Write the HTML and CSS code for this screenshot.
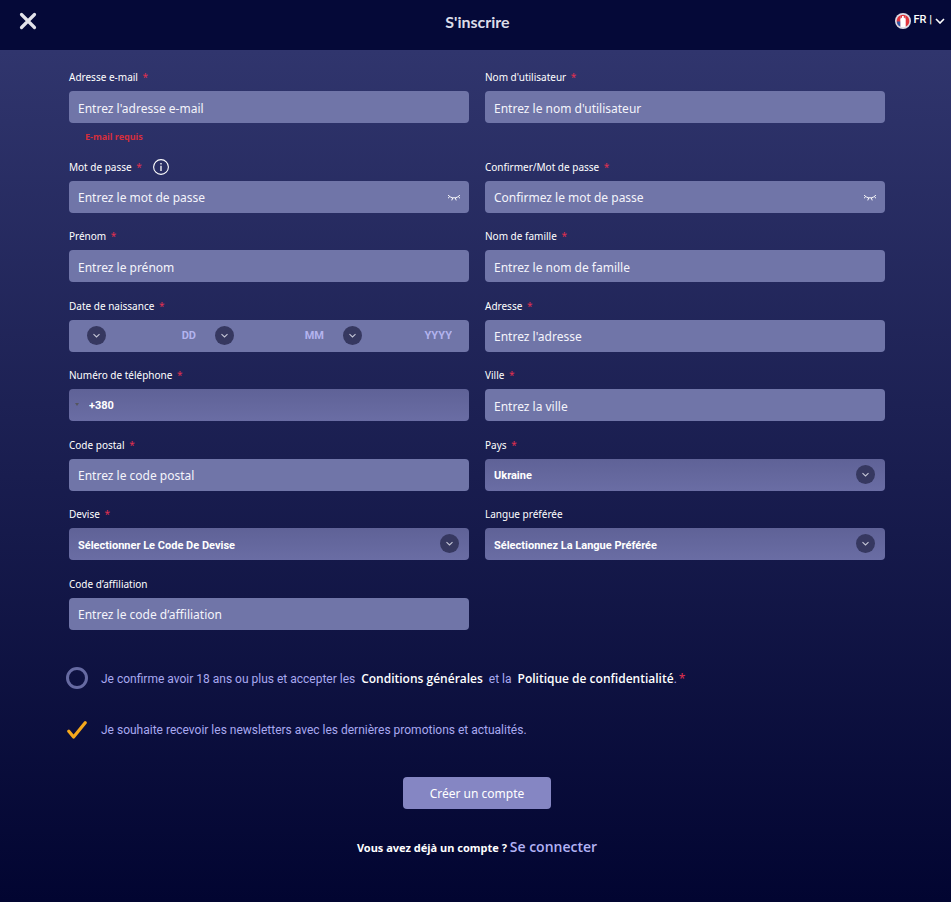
FILE: index.html
```html
<!DOCTYPE html>
<html lang="fr">
  <head>
    <meta charset="UTF-8" />
    <meta name="viewport" content="width=device-width, initial-scale=1.0" />
    <title>S'inscrire</title>
    <link rel="stylesheet" href="styles.css">
  </head>
  <body>
    <svg class="sprite" aria-hidden="true">
      <symbol id="chevron" viewBox="0 0 19 19">
        <circle cx="9.5" cy="9.5" r="9.5" fill="#363860" />
        <path d="M6.5 8.2l3 2.8 3-2.8" fill="none" stroke="#c5c6d6" stroke-width="1.1" />
      </symbol>
      <symbol id="eye" viewBox="0 0 14 8">
        <path d="M1.2 1C3.5 4.8 10.5 4.8 12.8 1M2.6 2.8L1 4.2M5.6 4L4.8 6.4M8.4 4l.8 2.4M11.4 2.8L13 4.2" fill="none" stroke="#fff" stroke-width="1" />
      </symbol>
    </svg>

    <header class="header">
      <button class="close" type="button" aria-label="Fermer">
        <svg width="18" height="18" viewBox="0 0 18 18">
          <path d="M2.5 2.5l13 13M15.5 2.5l-13 13" stroke="#e3e3ea" stroke-width="3.2" stroke-linecap="round" />
        </svg>
      </button>
      <h1>S'inscrire</h1>
      <button class="lang" type="button">
        <svg width="16" height="16" viewBox="0 0 16 16">
          <circle cx="8" cy="8" r="8" fill="#dcdce6" />
          <path d="M5.5 2.2v11.6A6.4 6.4 0 0 1 1.7 8a6.4 6.4 0 0 1 3.8-5.8z" fill="#e0343c" />
          <path d="M1.9 8.5h3.6v5.3a6.4 6.4 0 0 1-3.6-5.3z" fill="#2c5aa8" />
          <path d="M10.5 2.2v11.6A6.4 6.4 0 0 0 14.3 8a6.4 6.4 0 0 0-3.8-5.8z" fill="#e0343c" />
          <path d="M5.5 2.2a6.4 6.4 0 0 1 5 0v2.6h-5z" fill="#e0343c" />
          <path d="M5.5 6l1.5-1V3h1.8v2l1.7 1v8h-5z" fill="#fff" />
        </svg>
        <span>FR |</span>
        <svg width="10" height="6" viewBox="0 0 10 6">
          <path d="M1 1l4 4 4-4" fill="none" stroke="#fff" stroke-width="1.6" />
        </svg>
      </button>
    </header>

    <form class="form" id="form">
      <div class="fields">
        <div class="form-control">
          <label for="email">Adresse e-mail <b>*</b></label>
          <input type="text" id="email" placeholder="Entrez l'adresse e-mail" />
          <span class="error">E-mail requis</span>
        </div>
        <div class="form-control">
          <label for="username">Nom d'utilisateur <b>*</b></label>
          <input type="text" id="username" placeholder="Entrez le nom d'utilisateur" />
        </div>

        <div class="form-control">
          <div class="label-row">
            <label for="password">Mot de passe <b>*</b></label>
            <button class="info" type="button" aria-label="Information">
              <svg width="16" height="16" viewBox="0 0 16 16">
                <circle cx="8" cy="8" r="7.4" fill="none" stroke="#fff" stroke-width="1.1" />
                <path d="M8 4v1.5M8 6.8V12" stroke="#fff" stroke-width="1.3" />
              </svg>
            </button>
          </div>
          <div class="box">
            <input type="password" id="password" placeholder="Entrez le mot de passe" />
            <button class="eye" type="button" aria-label="Afficher"><svg width="14" height="8"><use href="#eye" /></svg></button>
          </div>
        </div>
        <div class="form-control">
          <label for="confirmpassword">Confirmer/Mot de passe <b>*</b></label>
          <div class="box">
            <input type="password" id="confirmpassword" placeholder="Confirmez le mot de passe" />
            <button class="eye" type="button" aria-label="Afficher"><svg width="14" height="8"><use href="#eye" /></svg></button>
          </div>
        </div>

        <div class="form-control">
          <label for="firstname">Prénom <b>*</b></label>
          <input type="text" id="firstname" placeholder="Entrez le prénom" />
        </div>
        <div class="form-control">
          <label for="lastname">Nom de famille <b>*</b></label>
          <input type="text" id="lastname" placeholder="Entrez le nom de famille" />
        </div>

        <div class="form-control">
          <label for="day">Date de naissance <b>*</b></label>
          <div class="date">
            <div class="box">
              <select id="day"><option>DD</option></select>
              <svg class="arrow"><use href="#chevron" /></svg>
            </div>
            <div class="box">
              <select id="month" aria-label="Mois"><option>MM</option></select>
              <svg class="arrow"><use href="#chevron" /></svg>
            </div>
            <div class="box">
              <select id="year" aria-label="Année"><option>YYYY</option></select>
              <svg class="arrow"><use href="#chevron" /></svg>
            </div>
          </div>
        </div>
        <div class="form-control">
          <label for="address">Adresse <b>*</b></label>
          <input type="text" id="address" placeholder="Entrez l'adresse" />
        </div>

        <div class="form-control">
          <label for="phone">Numéro de téléphone <b>*</b></label>
          <div class="box">
            <input class="phone" type="tel" id="phone" value="+380" />
            <span class="caret"></span>
          </div>
        </div>
        <div class="form-control">
          <label for="city">Ville <b>*</b></label>
          <input type="text" id="city" placeholder="Entrez la ville" />
        </div>

        <div class="form-control">
          <label for="zip">Code postal <b>*</b></label>
          <input type="text" id="zip" placeholder="Entrez le code postal" />
        </div>
        <div class="form-control">
          <label for="country">Pays <b>*</b></label>
          <div class="box">
            <select id="country"><option>Ukraine</option></select>
            <svg class="arrow"><use href="#chevron" /></svg>
          </div>
        </div>

        <div class="form-control">
          <label for="currency">Devise <b>*</b></label>
          <div class="box">
            <select id="currency"><option>Sélectionner Le Code De Devise</option></select>
            <svg class="arrow"><use href="#chevron" /></svg>
          </div>
        </div>
        <div class="form-control">
          <label for="language">Langue préférée</label>
          <div class="box">
            <select id="language"><option>Sélectionnez La Langue Préférée</option></select>
            <svg class="arrow"><use href="#chevron" /></svg>
          </div>
        </div>

        <div class="form-control">
          <label for="affiliate">Code d’affiliation</label>
          <input type="text" id="affiliate" placeholder="Entrez le code d’affiliation" />
        </div>
      </div>

      <div class="check">
        <input type="checkbox" id="terms" />
        <label for="terms">Je confirme avoir 18 ans ou plus et accepter les&nbsp; <a href="#">Conditions générales</a>&nbsp; et la&nbsp; <a href="#">Politique de confidentialité</a>.<b>*</b></label>
      </div>
      <div class="check">
        <input type="checkbox" id="news" checked />
        <svg class="tick" width="20" height="18" viewBox="0 0 20 18">
          <path d="M1.8 10.2l4.8 5.8L18.2 1.8" fill="none" stroke="#f5a81c" stroke-width="3.2" stroke-linecap="round" stroke-linejoin="round" />
        </svg>
        <label for="news">Je souhaite recevoir les newsletters avec les dernières promotions et actualités.</label>
      </div>

      <button class="btn" type="submit">Créer un compte</button>
      <p class="login">Vous avez déjà un compte ? <a href="#">Se connecter</a></p>
    </form>
  </body>
</html>
```
FILE: styles.css
```css
* {
  padding: 0;
  margin: 0;
  box-sizing: border-box;
  font-family: "Noto Sans", "Open Sans", sans-serif;
}
body {
  display: flex;
  flex-direction: column;
  min-height: 100vh;
  background-color: #020531;
  color: white;
}
button {
  border: none;
  background: none;
  color: white;
}
svg {
  display: block;
}
a {
  text-decoration: none;
}
.sprite {
  position: absolute;
  width: 0;
  height: 0;
}

.header {
  display: grid;
  grid-template-columns: 1fr auto 1fr;
  align-items: center;
  height: 50px;
  padding: 0 6px 8px 10px;
  background-color: #050938;
}
.header h1 {
  font-family: Lato, sans-serif;
  font-size: 16px;
  color: #dcdde8;
}
.close {
  justify-self: start;
  margin-left: 9px;
}
.lang {
  display: flex;
  align-items: center;
  justify-self: end;
  gap: 3px;
}
.lang span {
  padding-bottom: 3px;
  font-family: Roboto, sans-serif;
  font-size: 11px;
  font-weight: 500;
}

.form {
  display: flex;
  flex: 1;
  flex-direction: column;
  padding: 19px 66px 44px 69px;
  background: linear-gradient(#30356d, #020531);
}
.fields {
  display: grid;
  flex: 1;
  grid-template-columns: 1fr 1fr;
  align-content: space-between;
  column-gap: 16px;
  margin-bottom: 37px;
}
.form-control {
  display: flex;
  flex-direction: column;
}
.form-control label {
  height: 22px;
  font-size: 10px;
  line-height: 16px;
}
.form b {
  margin-left: 2px;
  color: #e0304f;
  font-weight: normal;
}
.label-row {
  display: flex;
  gap: 11px;
}
.info {
  height: 16px;
}
.form-control input,
.form-control select {
  display: block;
  width: 100%;
  height: 32px;
  padding: 2px 9px 0;
  border: none;
  border-radius: 4px;
  outline: none;
  background-color: #7075a8;
  color: white;
  font-size: 12px;
}
.form-control input::placeholder {
  color: #f4f4fb;
}
.form-control select,
.form-control .phone {
  appearance: none;
  background: linear-gradient(#5f6297, #6a6da4);
  font-family: Roboto, sans-serif;
  font-size: 11px;
  font-weight: bold;
}
.form-control .phone {
  padding: 0 20px;
}
.error {
  padding: 8px 16px 0;
  color: #d42e3c;
  font-size: 9px;
  font-weight: bold;
  line-height: 12px;
}
.box {
  position: relative;
}
.arrow {
  position: absolute;
  top: 6px;
  right: 10px;
  width: 19px;
  height: 19px;
  pointer-events: none;
}
.eye {
  position: absolute;
  top: 13px;
  right: 8px;
}
.caret {
  position: absolute;
  top: 14px;
  left: 6px;
  border: 2px solid transparent;
  border-top: 3px solid #55555f;
}
.date {
  display: grid;
  grid-template-columns: repeat(3, 1fr);
  height: 32px;
  padding: 0 8px;
  border-radius: 4px;
  background-color: #7075a8;
}
.form-control .date select {
  padding: 0 9px;
  background: none;
  color: #b3b3ee;
  text-align-last: right;
}
.date .arrow {
  right: auto;
  left: 10px;
}

.check {
  position: relative;
  display: flex;
  align-items: center;
  gap: 13px;
  height: 22px;
  margin: 0 0 30px -3px;
  color: #a9a9f0;
  font-size: 12px;
}
.check input {
  appearance: none;
  width: 22px;
  height: 22px;
  border: 3px solid #666aa2;
  border-radius: 50%;
}
.check input:checked {
  border-color: transparent;
}
.tick {
  position: absolute;
  left: 1px;
  pointer-events: none;
}
.check label {
  font-family: Roboto, sans-serif;
}
.check a {
  color: white;
  font-family: "Open Sans", sans-serif;
  font-weight: 600;
}
.btn {
  align-self: center;
  width: 148px;
  height: 32px;
  margin: 6px 0 27px;
  border-radius: 4px;
  background-color: #8586c3;
  font-size: 12px;
}
.login {
  font-size: 11px;
  font-weight: bold;
  line-height: 21px;
  text-align: center;
}
.login a {
  color: #b3b3f5;
  font-family: "Open Sans", sans-serif;
  font-size: 14px;
  font-weight: 600;
}
```
